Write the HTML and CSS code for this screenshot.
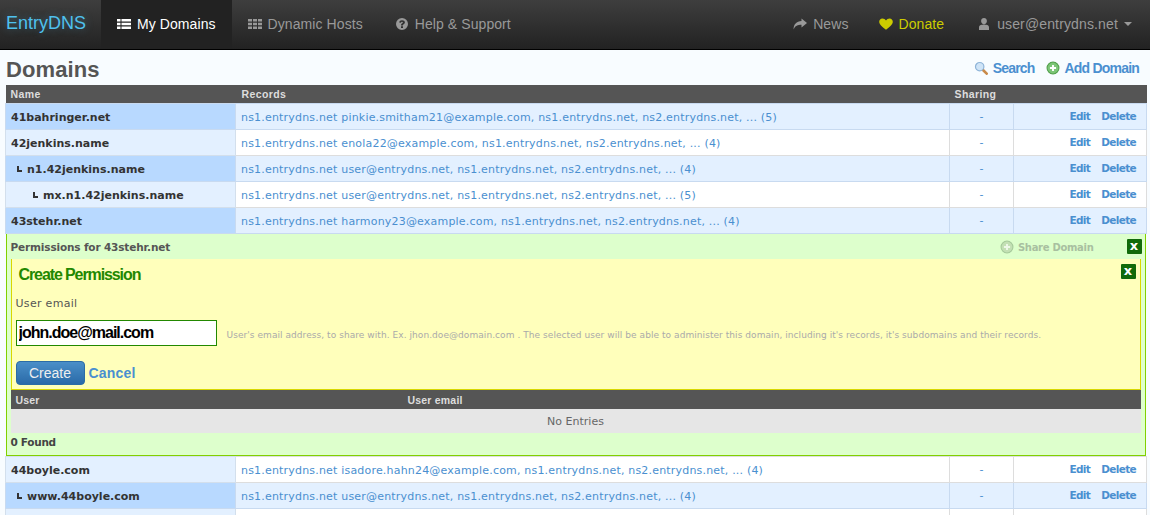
FILE: index.html
```html
<!DOCTYPE html>
<html lang="en">
<head>
    <meta charset="UTF-8">
    <meta name="viewport" content="width=device-width, initial-scale=1.0">
    <title>EntryDNS - Domains</title>
    <link rel="stylesheet" href="styles.css">
</head>
<body>

    <nav class="navbar">
        <a class="brand">EntryDNS</a>
        <a class="nav-link active">
            <svg class="nav-icon" viewBox="0 0 14 14"><path d="M0 2h3.5v2.5H0zM4.5 2H14v2.5H4.5zM0 5.8h3.5v2.5H0zM4.5 5.8H14v2.5H4.5zM0 9.6h3.5v2.5H0zM4.5 9.6H14v2.5H4.5z"/></svg>
            My Domains
        </a>
        <a class="nav-link">
            <svg class="nav-icon" viewBox="0 0 14 14"><path d="M0 2h4v2.6H0zM5 2h4v2.6H5zM10 2h4v2.6h-4zM0 5.7h4v2.6H0zM5 5.7h4v2.6H5zM10 5.7h4v2.6h-4zM0 9.4h4V12H0zM5 9.4h4V12H5zM10 9.4h4V12h-4z"/></svg>
            Dynamic Hosts
        </a>
        <a class="nav-link">
            <svg class="nav-icon" viewBox="0 0 14 14"><path fill-rule="evenodd" d="M7 1a6 6 0 1 1 0 12A6 6 0 0 1 7 1zM6 9.2v1.7h2V9.2zM7 3.2c-1.5 0-2.6.8-2.8 2.2l1.7.3c.1-.6.5-1 1.1-1 .5 0 .9.3.9.7 0 .5-.4.7-.9 1.1-.6.4-1 .9-1 1.9h1.9c0-.5.2-.7.8-1.1.7-.5 1.2-1.1 1.2-2 0-1.3-1.2-2.1-2.9-2.1z"/></svg>
            Help &amp; Support
        </a>
        <div class="nav-right">
            <a class="nav-link news">
                <svg class="nav-icon" viewBox="0 0 14 14"><path d="M8.5 1.5 14 6l-5.500 4.500V7.800C4.800 7.800 2.200 8.600.6 12.500.5 7.500 3.500 4.300 8.500 4.100z"/></svg>
                News
            </a>
            <a class="nav-link donate">
                <svg class="nav-icon" viewBox="0 0 14 14"><path d="M7 12.800C3.500 10 .2 7.500.2 4.700.2 2.800 1.600 1.500 3.400 1.500c1.500 0 2.800.8 3.600 2.100.8-1.300 2.100-2.100 3.600-2.100 1.800 0 3.200 1.300 3.200 3.200 0 2.800-3.300 5.300-6.800 8.100z"/></svg>
                Donate
            </a>
            <a class="nav-link user-menu">
                <svg class="nav-icon" viewBox="0 0 14 14"><path d="M7 1c1.700 0 2.900 1.300 2.900 3.100S8.700 7.400 7 7.400 4.100 5.900 4.100 4.100 5.300 1 7 1zM2 13V10.500C2 8.900 3.300 7.800 4.800 7.800h4.400c1.500 0 2.800 1.100 2.800 2.700V13z"/></svg>
                user@entrydns.net
                <span class="caret"></span>
            </a>
        </div>
    </nav>

    <div class="page-head">
        <h1>Domains</h1>
        <div class="page-actions">
            <a class="action-link">
                <svg class="small-icon" viewBox="0 0 16 16">
                    <path d="M10 10l4.500 4.500" stroke="#c98a4a" stroke-width="3" stroke-linecap="round"/>
                    <circle cx="6.500" cy="6.500" r="4.800" fill="#cfe4f7" stroke="#8fb4d8" stroke-width="1.400"/>
                </svg>
                Search
            </a>
            <a class="action-link">
                <svg class="small-icon" viewBox="0 0 16 16">
                    <circle cx="8" cy="8" r="6.800" fill="#7cc576" stroke="#4f9e48" stroke-width="1.200"/>
                    <path d="M8 4.500v7M4.500 8h7" stroke="#fff" stroke-width="2.200"/>
                </svg>
                Add Domain
            </a>
        </div>
    </div>

    <table class="domains">
        <colgroup>
            <col class="col-name">
            <col>
            <col class="col-sharing">
            <col class="col-actions">
        </colgroup>
        <thead>
            <tr>
                <th>Name</th>
                <th class="head-records">Records</th>
                <th>Sharing</th>
                <th></th>
            </tr>
        </thead>
        <tbody>
            <tr class="shaded">
                <td class="name">41bahringer.net</td>
                <td class="records">ns1.entrydns.net pinkie.smitham21@example.com, ns1.entrydns.net, ns2.entrydns.net, ... (5)</td>
                <td class="sharing">-</td>
                <td class="actions"><a>Edit</a><a>Delete</a></td>
            </tr>
            <tr>
                <td class="name">42jenkins.name</td>
                <td class="records">ns1.entrydns.net enola22@example.com, ns1.entrydns.net, ns2.entrydns.net, ... (4)</td>
                <td class="sharing">-</td>
                <td class="actions"><a>Edit</a><a>Delete</a></td>
            </tr>
            <tr class="shaded">
                <td class="name"><span class="level-1"><span class="tree"></span>n1.42jenkins.name</span></td>
                <td class="records">ns1.entrydns.net user@entrydns.net, ns1.entrydns.net, ns2.entrydns.net, ... (4)</td>
                <td class="sharing">-</td>
                <td class="actions"><a>Edit</a><a>Delete</a></td>
            </tr>
            <tr>
                <td class="name"><span class="level-2"><span class="tree"></span>mx.n1.42jenkins.name</span></td>
                <td class="records">ns1.entrydns.net user@entrydns.net, ns1.entrydns.net, ns2.entrydns.net, ... (5)</td>
                <td class="sharing">-</td>
                <td class="actions"><a>Edit</a><a>Delete</a></td>
            </tr>
            <tr class="shaded">
                <td class="name">43stehr.net</td>
                <td class="records">ns1.entrydns.net harmony23@example.com, ns1.entrydns.net, ns2.entrydns.net, ... (4)</td>
                <td class="sharing">-</td>
                <td class="actions"><a>Edit</a><a>Delete</a></td>
            </tr>
            <tr>
                <td colspan="4" class="panel-cell">
                    <div class="panel">
                        <div class="panel-head">
                            <span class="panel-title">Permissions for 43stehr.net</span>
                            <a class="share-link">
                                <svg class="small-icon" viewBox="0 0 16 16">
                                    <circle cx="8" cy="8" r="6.800" fill="#c3e0b4" stroke="#a5c99a" stroke-width="1.200"/>
                                    <path d="M8 4.500v7M4.500 8h7" stroke="#eef8e8" stroke-width="2.200"/>
                                </svg>
                                Share Domain
                            </a>
                            <a class="close-btn">x</a>
                        </div>
                        <form class="create-box">
                            <a class="close-btn close-inner">x</a>
                            <h2>Create Permission</h2>
                            <label for="email">User email</label>
                            <div class="field-row">
                                <input type="text" id="email" value="john.doe@mail.com">
                                <span class="hint">User's email address, to share with. Ex. jhon.doe@domain.com . The selected user will be able to administer this domain, including it's records, it's subdomains and their records.</span>
                            </div>
                            <div class="form-buttons">
                                <button type="button">Create</button>
                                <a class="cancel">Cancel</a>
                            </div>
                        </form>
                        <table class="users">
                            <thead>
                                <tr>
                                    <th class="col-user">User</th>
                                    <th>User email</th>
                                </tr>
                            </thead>
                            <tbody>
                                <tr><td colspan="2" class="empty">No Entries</td></tr>
                            </tbody>
                        </table>
                        <div class="found">0 Found</div>
                    </div>
                </td>
            </tr>
            <tr>
                <td class="name">44boyle.com</td>
                <td class="records">ns1.entrydns.net isadore.hahn24@example.com, ns1.entrydns.net, ns2.entrydns.net, ... (4)</td>
                <td class="sharing">-</td>
                <td class="actions"><a>Edit</a><a>Delete</a></td>
            </tr>
            <tr class="shaded">
                <td class="name"><span class="level-1"><span class="tree"></span>www.44boyle.com</span></td>
                <td class="records">ns1.entrydns.net user@entrydns.net, ns1.entrydns.net, ns2.entrydns.net, ... (4)</td>
                <td class="sharing">-</td>
                <td class="actions"><a>Edit</a><a>Delete</a></td>
            </tr>
            <tr>
                <td class="name">&nbsp;</td>
                <td class="records">&nbsp;</td>
                <td class="sharing">&nbsp;</td>
                <td class="actions">&nbsp;</td>
            </tr>
        </tbody>
    </table>

</body>
</html>
```

FILE: styles.css
```css
html, body {
    height: 515px;
    overflow: hidden;
}
body {
    margin: 0;
    background-color: #f8fcff;
    font-family: "DejaVu Sans", Verdana, sans-serif;
    font-size: 11px;
    color: #333;
}
a {
    cursor: pointer;
}

/* top bar */
.navbar {
    display: flex;
    height: 49px;
    background: linear-gradient(#3e3e3e, #222);
    border-bottom: 1px solid #000;
    font-family: "Liberation Sans", Arial, sans-serif;
    font-size: 14px;
    letter-spacing: 0.08px;
}
.brand {
    padding: 0 15px 0 6px;
    line-height: 47px;
    font-size: 18px;
    letter-spacing: 0;
    color: #4fc1ee;
    text-shadow: 0 0 8px rgba(79, 193, 238, 0.35);
    width: 80px;
}
.nav-link {
    display: flex;
    align-items: center;
    gap: 6px;
    padding: 0 16px 2px;
    color: #999;
}
.nav-link.active {
    background-color: #222;
    color: #fff;
}
.nav-icon {
    width: 14px;
    height: 14px;
    fill: currentColor;
}
.nav-right {
    display: flex;
    margin-left: auto;
    padding-right: 3px;
}
.nav-link.news {
    padding-right: 14px;
}
.nav-link.donate {
    padding-right: 17px;
    color: #cccc00;
}
.nav-link.user-menu {
    padding-right: 15px;
    letter-spacing: 0.14px;
}
.caret {
    width: 0;
    height: 0;
    border-left: 4px solid transparent;
    border-right: 4px solid transparent;
    border-top: 4px solid #999;
}

/* heading */
.page-head {
    display: flex;
    align-items: center;
    justify-content: space-between;
    height: 35px;
    padding: 0 11px 0 6px;
}
h1 {
    margin: 4px 0 0;
    font-family: "Liberation Sans", Arial, sans-serif;
    font-size: 22px;
    letter-spacing: 0.1px;
    color: #555;
}
.page-actions {
    display: flex;
    gap: 11px;
    margin-top: 1px;
}
.action-link {
    display: flex;
    align-items: center;
    gap: 5px;
    font-family: "Liberation Sans", Arial, sans-serif;
    font-size: 14px;
    font-weight: bold;
    letter-spacing: -0.8px;
    color: #4a8fd0;
}
.small-icon {
    width: 14px;
    height: 14px;
}

/* domain table */
.domains {
    width: 1142px;
    margin-left: 5px;
    border-collapse: collapse;
    table-layout: fixed;
}
.col-name {
    width: 230px;
}
.col-sharing {
    width: 64px;
}
.col-actions {
    width: 133px;
}
th {
    height: 18px;
    padding: 0 5px;
    background-color: #555;
    color: #ddd;
    font-size: 10.500px;
    font-family: "Liberation Sans", Arial, sans-serif;
    letter-spacing: 0.4px;
    text-align: left;
}
th.head-records {
    padding-left: 6px;
}
.domains > tbody > tr > td {
    height: 25px;
    padding: 0 5px;
    border: 1px solid #ddd;
    background-color: #fff;
}
.domains > tbody > tr > td.name, .domains > tbody > tr > td.records {
    height: 24px;
    padding-top: 1px;
}
.domains > tbody > tr > td.name {
    background-color: #e3f0ff;
    border-color: #d3dfec;
    font-weight: bold;
    color: #333;
}
.domains > tbody > tr.shaded > td {
    background-color: #e3f0ff;
    border-color: #c8daf0;
}
.domains > tbody > tr.shaded > td.name {
    background-color: #b8d9ff;
}
.records, .sharing, .actions a {
    color: #4a8fd0;
}
.records {
    letter-spacing: 0.19px;
}
.sharing {
    text-align: center;
}
.actions {
    text-align: right;
    font-weight: bold;
}
.domains > tbody > tr > td.actions {
    padding-right: 10px;
    border-left-color: #ccc;
}
.actions a {
    margin-left: 11px;
    font-size: 10.500px;
    letter-spacing: -0.65px;
}
.level-1 {
    padding-left: 6px;
}
.level-2 {
    padding-left: 22px;
}
.tree {
    display: inline-block;
    width: 3px;
    height: 4px;
    margin-right: 5px;
    border-left: 2px solid #333;
    border-bottom: 2px solid #333;
    vertical-align: 1px;
}

/* permissions panel */
.domains > tbody > tr > td.panel-cell {
    height: auto;
    padding: 0;
    border: none;
    background: none;
}
.panel {
    width: 1138px;
    border: 1px solid #80d000;
    border-top: none;
    background-color: #dfc;
}
.panel-head {
    display: flex;
    align-items: center;
    height: 25px;
    padding: 0 3px 0 4px;
    color: #555;
    font-weight: bold;
    font-size: 10.500px;
    letter-spacing: -0.15px;
}
.panel-title {
    margin-right: auto;
}
.share-link {
    display: flex;
    align-items: center;
    gap: 4px;
    margin: 1px 33px 0 0;
    color: #a8c0a0;
    font-size: 10px;
    letter-spacing: -0.3px;
}
.close-btn {
    display: block;
    width: 15px;
    height: 15px;
    border-radius: 1px;
    background-color: #116a0a;
    color: #fff;
    text-align: center;
    font-size: 13px;
    font-weight: bold;
    letter-spacing: 0;
    line-height: 13px;
}
.create-box {
    position: relative;
    height: 131px;
    margin: 0 4px;
    background-color: #ffb;
    border-left: 1px solid #d8d800;
    border-right: 1px solid #d8d800;
    border-bottom: 1px solid #d8d800;
    padding-left: 4px;
    box-sizing: border-box;
}
.close-inner {
    position: absolute;
    top: 5px;
    right: 4px;
}
h2 {
    margin: 0;
    padding: 7px 0 0 3px;
    font-family: "Liberation Sans", Arial, sans-serif;
    font-size: 16px;
    line-height: 18px;
    letter-spacing: -1.1px;
    color: #228800;
}
label {
    display: block;
    margin-top: 13px;
    color: #555;
    letter-spacing: 0.3px;
}
.field-row {
    display: flex;
    align-items: center;
    gap: 10px;
    margin-top: 10px;
}
input {
    flex: none;
    width: 201px;
    height: 26px;
    box-sizing: border-box;
    padding: 0 2px;
    border: 1px solid #228800;
    background-color: #fff;
    font-family: "Liberation Sans", Arial, sans-serif;
    font-size: 16px;
    font-weight: bold;
    letter-spacing: -1px;
    color: #000;
}
.hint {
    margin-top: 4px;
    font-size: 9px;
    letter-spacing: 0.06px;
    color: #aaa;
    white-space: nowrap;
}
.form-buttons {
    display: flex;
    align-items: center;
    gap: 4px;
    margin-top: 15px;
}
button {
    width: 69px;
    height: 24px;
    border: 1px solid #2c6ca5;
    border-radius: 4px;
    background: linear-gradient(#4a8fc8, #2a6aa8);
    color: #eee;
    font-family: "Liberation Sans", Arial, sans-serif;
    font-size: 14px;
    cursor: pointer;
}
.cancel {
    font-family: "Liberation Sans", Arial, sans-serif;
    font-size: 14px;
    font-weight: bold;
    letter-spacing: 0.2px;
    color: #4a8fd0;
}
.users {
    width: 1130px;
    margin-left: 4px;
    border-collapse: collapse;
}
.users th {
    height: 19px;
    letter-spacing: 0.2px;
}
.col-user {
    width: 382px;
}
.empty {
    height: 23px;
    padding: 1px 0 0;
    background-color: #e6e6e6;
    color: #666;
    text-align: center;
}
.found {
    padding: 3px 4px 0;
    height: 19px;
    color: #444;
    font-weight: bold;
    font-size: 10.500px;
    letter-spacing: -0.3px;
}
```
